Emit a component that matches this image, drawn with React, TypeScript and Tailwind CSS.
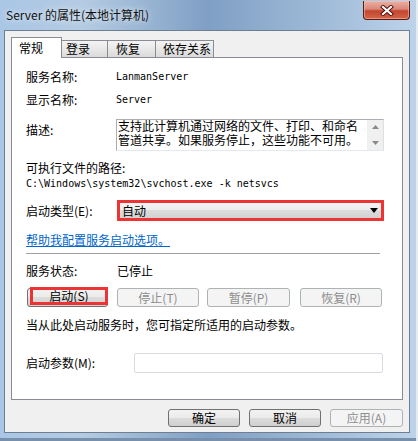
import React from "react";

const enabledBtn =
  "flex items-center justify-center rounded-[3px] border border-[#707070] bg-[linear-gradient(to_bottom,#f2f2f2_0%,#ebebeb_50%,#dddddd_50%,#cfcfcf_100%)] text-[12px] leading-[16px] text-black";
const disabledBtn =
  "flex items-center justify-center rounded-[3px] border border-[#adb2b5] bg-[#f4f4f4] text-[12px] leading-[16px] text-[#8d8d8d]";

export default function App() {
  return (
    <div className="flex h-[441px] w-[418px] overflow-hidden bg-[#dfe6ee] font-['Noto_Sans_CJK_SC','Noto_Sans',sans-serif] text-[12px] text-black">
      {/* window */}
      <div className="flex w-[416px] flex-col bg-[linear-gradient(90deg,#a9c6e6_0%,#b4cbe2_20%,#7f9fc4_50%,#9cb8d6_75%,#bdd3ea_100%)]">
        {/* title bar */}
        <div className="flex h-[30px] items-start justify-between">
          <div className="pl-[6px] pt-[7px] text-[12px] leading-[16px] text-[#111] [text-shadow:0_0_6px_rgba(255,255,255,0.95)]">
            Server 的属性(本地计算机)
          </div>
          <div className="mr-[6px] mt-[1px] flex h-[19px] w-[47px] items-center justify-center rounded-b-[4px] border border-t-0 border-[#5a1a10] bg-[linear-gradient(to_bottom,#eab0a2_0%,#d9887a_45%,#c4462e_55%,#d2654a_100%)] shadow-[inset_0_0_0_1px_rgba(255,200,190,0.5)]">
            <svg width="14" height="11" viewBox="0 0 14 11">
              <path d="M3 2 L11 9 M11 2 L3 9" stroke="#4a0c05" strokeWidth="4" strokeLinecap="square" />
              <path d="M3 2 L11 9 M11 2 L3 9" stroke="#ffffff" strokeWidth="2.2" strokeLinecap="square" />
            </svg>
          </div>
        </div>

        {/* middle: frame + client + frame */}
        <div className="flex h-[403px]">
          <div className="w-[4px]" />
          {/* client */}
          <div className="flex w-[406px] flex-col border border-[#6f7f92] bg-[#f0f0f0]">
            {/* tabs */}
            <div className="ml-[6px] mt-[6px] flex h-[20px] items-end">
              <div className="relative z-10 -mb-px flex h-[21px] w-[51px] items-start border border-b-0 border-[#898c95] bg-white pl-[7px] pt-[2px] leading-[16px]">
                常规
              </div>
              <div className="-ml-px flex h-[17px] w-[47px] items-center border border-b-0 border-[#898c95] bg-[linear-gradient(to_bottom,#f3f3f3_0%,#e8e8e8_50%,#dadada_100%)] pl-[4px] leading-[16px]">
                登录
              </div>
              <div className="-ml-px flex h-[17px] w-[49px] items-center border border-b-0 border-[#898c95] bg-[linear-gradient(to_bottom,#f3f3f3_0%,#e8e8e8_50%,#dadada_100%)] pl-[8px] leading-[16px]">
                恢复
              </div>
              <div className="-ml-px flex h-[17px] w-[59px] items-center border border-b-0 border-[#898c95] bg-[linear-gradient(to_bottom,#f3f3f3_0%,#e8e8e8_50%,#dadada_100%)] pl-[7px] leading-[16px]">
                依存关系
              </div>
            </div>

            {/* panel */}
            <div className="ml-[6px] flex h-[343px] w-[392px] flex-col border border-[#898c95] bg-white pl-[14px]">
              <div className="mt-[11px] flex h-[16px] items-center leading-[16px]">
                <div className="w-[90px]">服务名称:</div>
                <div className="font-['DejaVu_Sans_Mono',monospace] text-[10px]">LanmanServer</div>
              </div>
              <div className="mt-[7px] flex h-[16px] items-center leading-[16px]">
                <div className="w-[90px]">显示名称:</div>
                <div className="font-['DejaVu_Sans_Mono',monospace] text-[10px]">Server</div>
              </div>
              <div className="mt-[11px] flex h-[32px] items-start leading-[16px]">
                <div className="mt-[3px] w-[90px]">描述:</div>
                <div className="flex h-[32px] w-[268px] border border-[#abadb3] border-b-[#e3e9ef] border-r-[#dbdfe6] bg-white">
                  <div className="-mt-[1px] flex-1 pl-[1px] text-[12px] leading-[14px]">
                    <div>支持此计算机通过网络的文件、打印、和命名</div>
                    <div>管道共享。如果服务停止，这些功能不可用。</div>
                  </div>
                  <div className="flex w-[16px] flex-col items-center justify-between bg-[#f0f0f0] py-[5px]">
                    <svg width="7" height="4" viewBox="0 0 7 4">
                      <path d="M0 4 L3.5 0 L7 4 Z" fill="#8a8a8a" />
                    </svg>
                    <svg width="7" height="4" viewBox="0 0 7 4">
                      <path d="M0 0 L7 0 L3.5 4 Z" fill="#8a8a8a" />
                    </svg>
                  </div>
                </div>
              </div>
              <div className="mt-[9px] h-[16px] leading-[16px]">可执行文件的路径:</div>
              <div className="flex h-[16px] items-center font-['DejaVu_Sans_Mono',monospace] text-[10px] leading-[16px]">
                {"C:\\Windows\\system32\\svchost.exe -k netsvcs"}
              </div>
              <div className="mt-[8px] flex h-[21px] items-center leading-[16px]">
                <div className="w-[91px]">启动类型(E):</div>
                <div className="flex h-[21px] w-[267px] items-center justify-between border-[3px] border-[#ec3434] bg-[linear-gradient(to_bottom,#f4f4f4_0%,#ebebeb_50%,#dcdcdc_50%,#d2d2d2_100%)] pl-[2px] pr-[3px]">
                  <span className="leading-[15px]">自动</span>
                  <svg width="8" height="5" viewBox="0 0 8 5">
                    <path d="M0 0 L8 0 L4 5 Z" fill="#000" />
                  </svg>
                </div>
              </div>
              <div className="mt-[11px] h-[16px] leading-[16px] text-[#0066cc] underline">帮助我配置服务启动选项。</div>
              <div className="mt-[5px] h-px w-[354px] bg-[#a0a0a0]" />
              <div className="mt-[9px] flex h-[16px] items-center leading-[16px]">
                <div className="w-[91px]">服务状态:</div>
                <div>已停止</div>
              </div>
              <div className="mt-[9px] flex h-[19px] items-center">
                <div className="relative ml-[1px] h-[19px] w-[81px]">
                  <div className={enabledBtn + " h-[19px] w-[81px] pb-[3px] pl-[3px]"}>启动(S)</div>
                  <div className="absolute left-[3px] top-[-1px] h-[18px] w-[78px] border-[3px] border-[#ec3434]" />
                </div>
                <div className={disabledBtn + " ml-[9px] h-[19px] w-[82px]"}>停止(T)</div>
                <div className={disabledBtn + " ml-[8px] h-[19px] w-[83px]"}>暂停(P)</div>
                <div className={disabledBtn + " ml-[10px] h-[19px] w-[82px]"}>恢复(R)</div>
              </div>
              <div className="mt-[10px] h-[16px] leading-[16px]">当从此处启动服务时，您可指定所适用的启动参数。</div>
              <div className="mt-[20px] flex h-[20px] items-center leading-[16px]">
                <div className="w-[108px]">启动参数(M):</div>
                <div className="h-[20px] w-[249px] rounded-[2px] border border-[#d9dbe0] bg-white" />
              </div>
            </div>

            {/* bottom buttons */}
            <div className="mt-[9px] flex h-[18px] justify-end pr-[6px]">
              <div className={enabledBtn + " h-[18px] w-[72px]"}>确定</div>
              <div className={enabledBtn + " ml-[9px] h-[18px] w-[72px]"}>取消</div>
              <div className={disabledBtn + " ml-[9px] h-[18px] w-[73px]"}>应用(A)</div>
            </div>
          </div>
          <div className="w-[6px]" />
        </div>
        <div className="h-[5px]" />
        <div className="h-[3px] bg-[#7890ab]" />
      </div>
      <div className="w-[2px] bg-[#e6ebf0]" />
    </div>
  );
}
